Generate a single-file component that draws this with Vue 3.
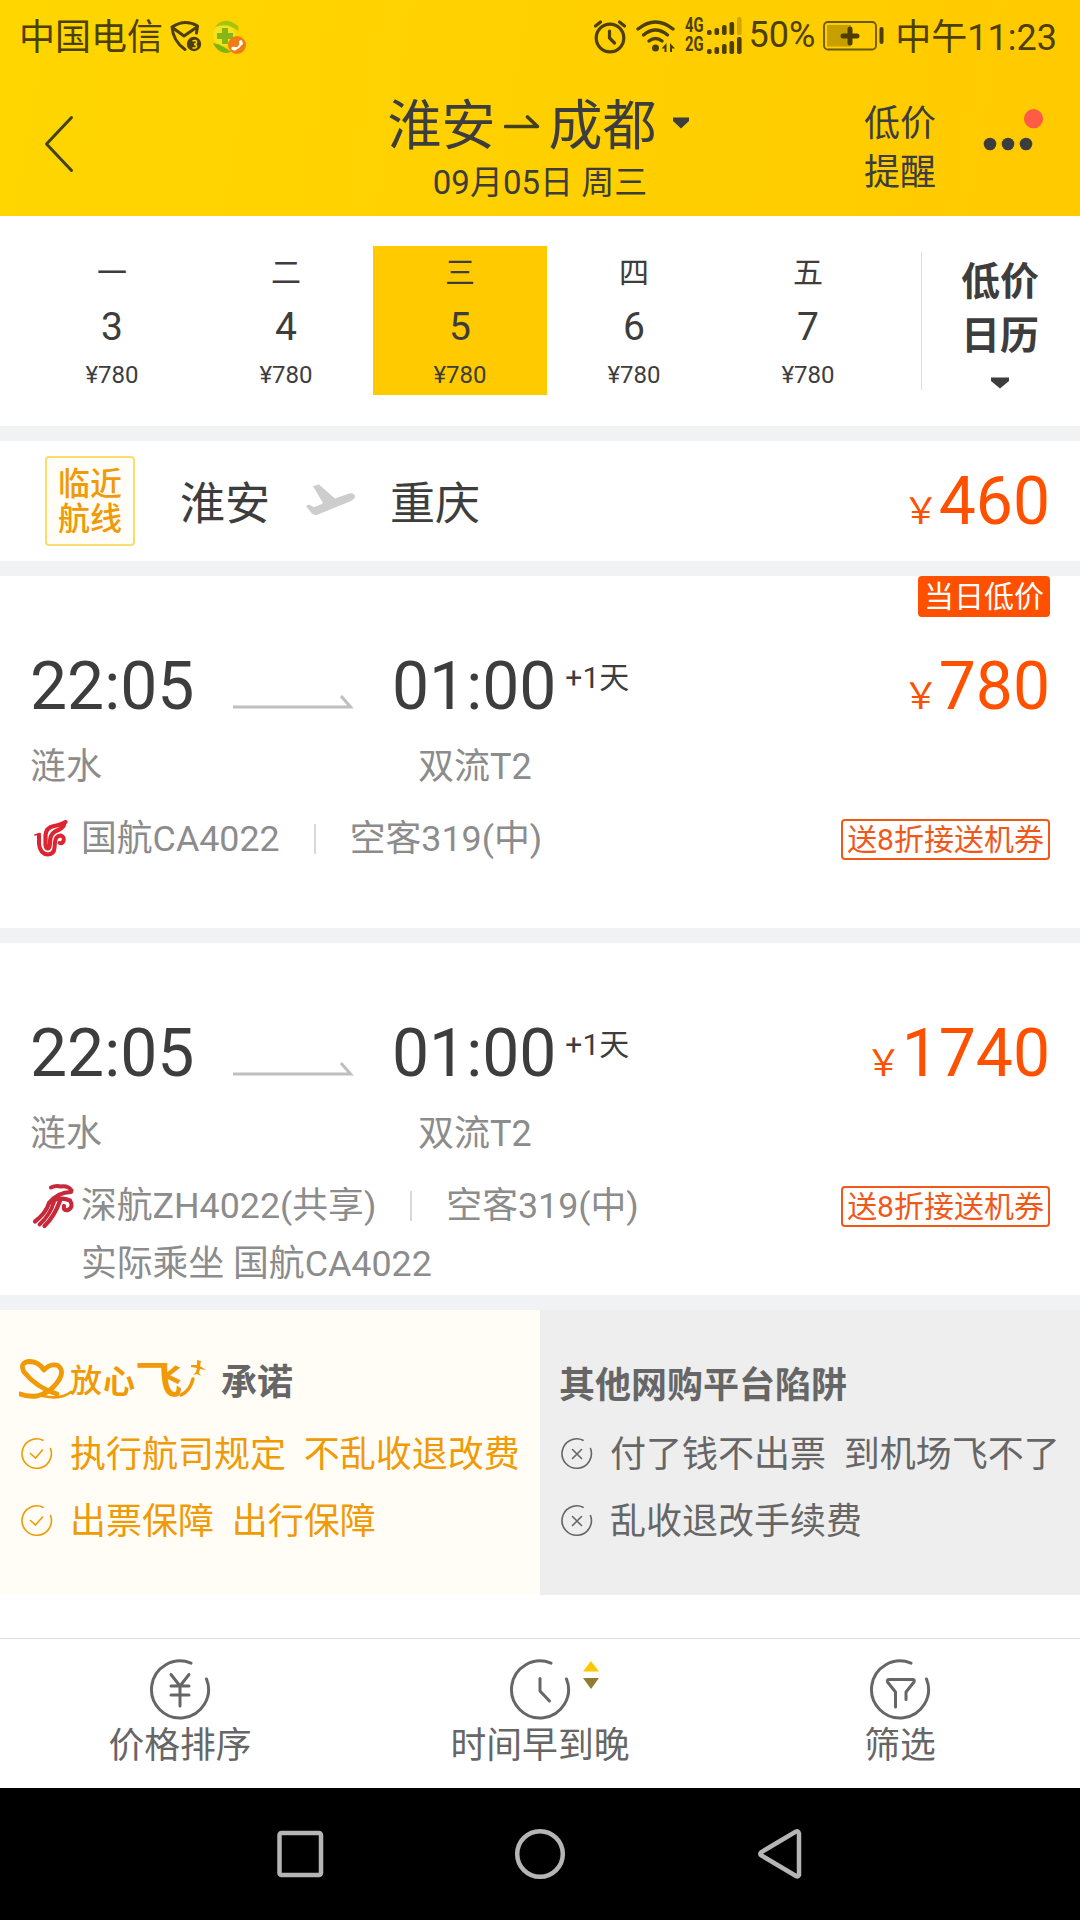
<template>
  <div class="page">
    <header class="header">
      <!-- Status bar -->
      <div class="status-bar">
        <span class="carrier">中国电信</span>
        <svg class="mail-icon" width="32" height="34" viewBox="0 0 32 34">
          <path d="M15 29.500Q3 21 2 7Q15 -1.500 27.500 6L26.500 13" fill="none" stroke="#4d3f00" stroke-width="3" stroke-linejoin="round" stroke-linecap="round" />
          <path d="M3 8L14 16L27 7" fill="none" stroke="#4d3f00" stroke-width="3" stroke-linejoin="round" />
          <circle cx="24" cy="24" r="7.200" fill="#4d3f00" />
          <path d="M22.500 21q4-1.500 4 1.300q0 1.700-2.500 1.900q2.500.2 2.500 2q0 2.600-4 1.600" fill="none" stroke="#ffd400" stroke-width="1.500" />
        </svg>
        <svg class="care-icon" width="36" height="38" viewBox="0 0 36 38">
          <circle cx="13" cy="17" r="11" fill="#f3e21c" />
          <path d="M4 9Q13 -3 27 8Q28 11 27 13Q17 4 4 9Z" fill="#a5c40c" />
          <path d="M2 25Q12 27 20 34Q8 38 2 25Z" fill="#7fb212" />
          <path d="M11 10h6v5h5v6h-5v5h-6v-5H6v-6h5z" fill="#86b516" />
          <circle cx="26" cy="27" r="9" fill="#ef7d14" />
          <path d="M22 31Q29 31 30 24" fill="none" stroke="#fff" stroke-width="1.800" stroke-linecap="round" />
          <path d="M22 30.500l2 .2M29.800 24l.4 1.500" fill="none" stroke="#fff" stroke-width="3.400" stroke-linecap="round" />
        </svg>
        <span class="spacer"></span>
        <svg class="alarm-icon" width="34" height="36" viewBox="0 0 34 36" fill="none" stroke="#4d3f00" stroke-width="3.200" stroke-linecap="round">
          <circle cx="17" cy="20" r="13.800" />
          <path d="M16.500 13v7l5 5" />
          <path d="M2.500 8l5-4M31.500 8l-5-4" />
        </svg>
        <svg class="wifi-icon" width="40" height="36" viewBox="0 0 40 36" fill="none" stroke="#4d3f00" stroke-width="3.400" stroke-linecap="round">
          <path d="M2 10Q19.500 -4 37 10" />
          <path d="M7.500 16Q19.500 6 31.500 16" />
          <path d="M13 22Q19.500 17 26 22" />
          <circle cx="19.500" cy="29" r="3.500" fill="#4d3f00" stroke="none" />
          <path d="M25.500 29.500l5-5.500v9h-2v-3.500zM34 24l5 5.500h-3v3.500h-2z" stroke="none" fill="#4d3f00" />
        </svg>
        <div class="net-labels">
          <span>4G</span>
          <span>2G</span>
        </div>
        <svg class="signal-icon" width="36" height="38" viewBox="0 0 36 38" fill="#4d3f00">
          <g v-for="(h, i) in [5, 7, 10, 13, 17]" :key="i">
            <rect v-if="i < 4" :x="i * 7.500" :y="18 - h" width="4.600" :height="h" rx="1.800" />
            <rect :x="i * 7.500" :y="37 - h" width="4.600" :height="h" rx="1.800" />
          </g>
          <rect x="30" y="0" width="4.600" height="18" rx="1.800" fill="#d0a800" />
        </svg>
        <span class="battery-text">50%</span>
        <svg class="battery-icon" width="62" height="32" viewBox="0 0 62 32">
          <rect x="1" y="2" width="52" height="27.500" rx="4" fill="none" stroke="#6b5800" stroke-width="1.800" />
          <rect x="4" y="5" width="24" height="21.500" fill="#c79f00" />
          <path d="M27 9v14M20 16h14" stroke="#4d3f00" stroke-width="5" stroke-linecap="round" />
          <rect x="56.500" y="7" width="4" height="17" rx="2" fill="#4d3f00" />
        </svg>
        <span class="clock">中午11:23</span>
      </div>

      <!-- Title bar -->
      <div class="title-bar">
        <div class="title-left">
          <svg width="30" height="58" viewBox="0 0 30 58">
            <path d="M27.500 2.500L2.500 29L27.500 55.500" fill="none" stroke="#45401c" stroke-width="3" stroke-linecap="round" stroke-linejoin="round" />
          </svg>
        </div>
        <div class="title-center">
          <div class="route">
            <span>淮安</span>
            <svg class="route-arrow" width="36" height="16" viewBox="0 0 36 16">
              <path d="M1.500 12.500H33.500L23.500 3" fill="none" stroke="#45401c" stroke-width="3.600" stroke-linecap="round" stroke-linejoin="round" />
            </svg>
            <span>成都</span>
            <svg class="route-caret" width="18" height="12" viewBox="0 0 18 12">
              <path d="M1 0.500H17V4L9 11.500L1 4Z" fill="#3d3d3d" />
            </svg>
          </div>
          <div class="route-date">09月05日 周三</div>
        </div>
        <div class="title-right">
          <div class="remind">低价<br />提醒</div>
          <svg class="more-icon" width="62" height="44" viewBox="0 0 62 44">
            <circle cx="7" cy="35" r="6.300" fill="#3d3d3d" />
            <circle cx="25" cy="35" r="6.300" fill="#3d3d3d" />
            <circle cx="43" cy="35" r="6.300" fill="#3d3d3d" />
            <circle cx="50.500" cy="9.700" r="9.600" fill="#ff5b45" />
          </svg>
        </div>
      </div>
    </header>

    <!-- Dates -->
    <section class="dates">
      <div
        v-for="(day, index) in days"
        :key="day.date"
        class="day"
        :class="{ active: index === selectedDay }"
        @click="selectedDay = index"
      >
        <span class="day-week">{{ day.week }}</span>
        <span class="day-num">{{ day.date }}</span>
        <span class="day-price">¥{{ day.price }}</span>
      </div>
      <div class="calendar">
        <span>低价</span>
        <span>日历</span>
        <svg width="20" height="12" viewBox="0 0 20 12">
          <path d="M1 0.500H19V4L10 11.500L1 4Z" fill="#3d3d3d" />
        </svg>
      </div>
    </section>

    <!-- Nearby route -->
    <section class="nearby">
      <div class="nearby-badge">临近<br />航线</div>
      <span class="nearby-city">淮安</span>
      <svg class="plane-icon" width="51" height="34" viewBox="0 0 51 34">
        <path d="M8 3L14 1.500L30 15.500L44 10.500Q49 9.500 50 13Q50 16 46 18L13 31.500Q9 33 6.500 30L1 23L4 21.500L8.500 24Q15 22.500 18 20Z" fill="#cdcdcd" />
      </svg>
      <span class="nearby-city">重庆</span>
      <span class="spacer"></span>
      <div class="price"><span class="yen">￥</span>460</div>
    </section>

    <!-- Flights -->
    <section v-for="flight in flights" :key="flight.no" class="flight">
      <span v-if="flight.tag" class="flight-tag">{{ flight.tag }}</span>
      <div class="flight-times">
        <span class="time depart">{{ flight.depart }}</span>
        <svg class="line-arrow" width="122" height="16" viewBox="0 0 122 16">
          <path d="M0 13H117.500L108 2" fill="none" stroke="#bfbfbf" stroke-width="3" />
        </svg>
        <span class="time">{{ flight.arrive }}</span>
        <span class="plus-day">+1天</span>
        <span class="spacer"></span>
        <div class="price"><span class="yen">￥</span>{{ flight.price }}</div>
      </div>
      <div class="flight-ports">
        <span class="port-from">{{ flight.from }}</span>
        <span>{{ flight.to }}</span>
      </div>
      <div class="flight-info">
        <div class="airline-logo">
          <svg v-if="flight.logo === 'ca'" class="logo-ca" width="34" height="38" viewBox="0 0 34 38" fill="none" stroke="#dc2531" stroke-linecap="round">
            <path d="M1 15L6 13.500" stroke-width="1.600" />
            <path d="M5 15V24Q6 34 14 34.500Q20 34 20.500 28L21 22Q21.500 16 26.500 15.500Q31 17 29.500 21Q28 24 25.500 23" stroke-width="4" />
            <path d="M11.500 16V25Q12 28.500 14 28.500Q16 28 16 22Q16 14.500 21 11.500Q28 9 30 5" stroke-width="4.200" />
            <path d="M11.500 15Q12 7.500 20 6Q28 4.500 31.500 2" stroke-width="4" />
          </svg>
          <svg v-else width="43" height="46" viewBox="0 0 43 46" fill="none" stroke="#c7283a" stroke-linecap="round">
            <path d="M19 4.500Q24 2 29 3.500Q36 2.500 39.500 7.500" stroke-width="4" />
            <path d="M39 9Q26 9 17 20Q27 13 38 17.500Q42 24 36 27Q31 28 32 23" stroke-width="4.200" />
            <path d="M17 20Q14 30 3 38.500" stroke-width="4.200" />
            <path d="M22 19Q18 32 7.500 41.500" stroke-width="3.800" />
            <path d="M28 18Q22 34 12.500 43" stroke-width="4.200" />
          </svg>
        </div>
        <span>{{ flight.no }}</span>
        <i class="bar"></i>
        <span>{{ flight.plane }}</span>
        <span class="spacer"></span>
        <span class="coupon">送8折接送机券</span>
      </div>
      <div v-if="flight.actual" class="flight-actual">{{ flight.actual }}</div>
    </section>

    <!-- Promise -->
    <section class="promise">
      <div class="promise-col good">
        <div class="promise-title">
          <svg class="promise-logo" width="190" height="64" viewBox="0 -10 190 64">
            <g fill="none" stroke="#ef9a06" stroke-linecap="round" stroke-linejoin="round">
              <path d="M38 35Q18 29 5 13Q0 3 11 2.500Q20 3 25 11Q31 4 39 6.500Q47 13 37 25Q30 34 18 37Q8 38 1 35" stroke-width="4.800" />
              <path d="M24 37Q42 41 52 33" stroke-width="2.600" />
              <path d="M162 36Q171 32 174 20" stroke-width="3.400" />
            </g>
            <text x="51" y="33" font-size="32" font-weight="500" fill="#ef9a06">放</text>
            <text x="84" y="34" font-size="32" font-weight="700" fill="#ef9a06">心</text>
            <text x="0" y="0" font-size="38" font-weight="700" fill="#ef9a06" transform="translate(116 34) scale(1.250 1)">飞</text>
            <path d="M178 1L182 2L181 7L187 11L181 10L180 14L182 17L178 15L174 16L177 13L178 9L172 8L172 6L178 6Z" fill="#ef9a06" />
          </svg>
          <b>承诺</b>
        </div>
        <div v-for="text in goods" :key="text" class="promise-row">
          <svg width="32" height="32" viewBox="0 0 32 32" fill="none" stroke="#ef9a06" stroke-width="1.600" stroke-linecap="round">
            <path d="M22 2.300A14.700 14.700 0 1 0 29.500 10.500" />
            <path d="M9.500 15.500L14.500 20L21.500 12" />
          </svg>
          <span>{{ text }}</span>
        </div>
      </div>
      <div class="promise-col bad">
        <div class="promise-title"><b>其他网购平台陷阱</b></div>
        <div v-for="text in bads" :key="text" class="promise-row">
          <svg width="32" height="32" viewBox="0 0 32 32" fill="none" stroke="#666" stroke-width="1.600" stroke-linecap="round">
            <path d="M22 2.300A14.700 14.700 0 1 0 29.500 10.500" />
            <path d="M11.500 11.500L20.500 20.500M20.500 11.500L11.500 20.500" />
          </svg>
          <span>{{ text }}</span>
        </div>
      </div>
    </section>

    <!-- Sort bar -->
    <footer class="toolbar">
      <div v-for="tool in tools" :key="tool.name" class="tool">
        <svg class="tool-icon" width="62" height="62" viewBox="0 0 62 62" fill="none" stroke="#666" stroke-width="3" stroke-linecap="round" stroke-linejoin="round">
          <path d="M42 4.200A28.500 28.500 0 1 0 57.500 20" />
          <path v-if="tool.icon === 'yen'" d="M22 15.500L31 27L40 15.500M22 27H40M22 36H40M31 27V47" />
          <path v-else-if="tool.icon === 'clock'" d="M31 19.500V32L40.500 42" />
          <path v-else d="M26.500 48V33L18.500 23Q18 20.500 20 20.500H43.500Q46 20.500 45 23L37 33V40.500" />
        </svg>
        <svg v-if="tool.icon === 'clock'" class="sort-arrows" width="16" height="29" viewBox="0 0 16 29">
          <path d="M8 0L16 10.500H0Z" fill="#fdc700" />
          <path d="M0 17H16L8 28Z" fill="#8f7d33" />
        </svg>
        <span>{{ tool.name }}</span>
      </div>
    </footer>

    <!-- System nav -->
    <nav class="sys-nav">
      <svg width="52" height="52" viewBox="0 0 52 52"><rect x="5.500" y="5" width="41.500" height="42" rx="2" /></svg>
      <svg width="52" height="52" viewBox="0 0 52 52"><circle cx="26" cy="26" r="22.800" /></svg>
      <svg width="52" height="52" viewBox="0 0 52 52"><path d="M45 5.500V47Q44 49 42 48L7.500 27.500Q5 26 7.500 24L42 3.500Q44.500 2.500 45 5.500Z" /></svg>
    </nav>
  </div>
</template>

<script setup>
import { ref } from 'vue'

const selectedDay = ref(2)

const days = [
  { week: '一', date: 3, price: 780 },
  { week: '二', date: 4, price: 780 },
  { week: '三', date: 5, price: 780 },
  { week: '四', date: 6, price: 780 },
  { week: '五', date: 7, price: 780 }
]

const flights = [
  {
    no: '国航CA4022',
    logo: 'ca',
    tag: '当日低价',
    depart: '22:05',
    arrive: '01:00',
    from: '涟水',
    to: '双流T2',
    plane: '空客319(中)',
    price: 780
  },
  {
    no: '深航ZH4022(共享)',
    logo: 'zh',
    depart: '22:05',
    arrive: '01:00',
    from: '涟水',
    to: '双流T2',
    plane: '空客319(中)',
    price: 1740,
    actual: '实际乘坐 国航CA4022'
  }
]

const goods = ['执行航司规定  不乱收退改费', '出票保障  出行保障']
const bads = ['付了钱不出票  到机场飞不了', '乱收退改手续费']

const tools = [
  { name: '价格排序', icon: 'yen' },
  { name: '时间早到晚', icon: 'clock' },
  { name: '筛选', icon: 'filter' }
]
</script>

<style>
body {
  margin: 0;
}
</style>

<style scoped>
.page {
  width: 1080px;
  height: 1920px;
  display: flex;
  flex-direction: column;
  overflow: hidden;
  background: #fff;
  color: #3d3d3d;
  font-family: Roboto, "Noto Sans CJK SC", sans-serif;
  font-size: 36px;
  font-weight: 400;
}

svg {
  display: block;
  flex-shrink: 0;
}

span,
b {
  white-space: pre;
}

.spacer {
  flex: 1;
}

.header {
  height: 216px;
  background: linear-gradient(100deg, #ffd600, #ffca00);
}

/* Status bar */
.status-bar {
  display: flex;
  height: 72px;
  padding: 0 23px 0 19px;
  color: #4d3f00;
  line-height: 76px;
}

.mail-icon {
  margin: 20px 0 0 7px;
}

.care-icon {
  margin: 18px 0 0 9px;
}

.alarm-icon {
  margin-top: 18px;
}

.wifi-icon {
  margin: 19px 0 0 9px;
}

.net-labels {
  display: flex;
  flex-direction: column;
  width: 20px;
  margin: 16px 0 0 9px;
  font-size: 20px;
  font-weight: 700;
  line-height: 19px;
}

.net-labels span {
  transform: scaleX(0.74);
  transform-origin: left;
}

.signal-icon {
  margin: 17px 0 0 2px;
}

.battery-text {
  margin-left: 6px;
  line-height: 71px;
}

.battery-icon {
  margin: 20px 0 0 8px;
}

.clock {
  margin-left: 10px;
}

/* Title bar */
.title-bar {
  display: grid;
  grid-template-columns: 1fr auto 1fr;
  height: 144px;
}

.title-left {
  padding: 43px 0 0 44px;
}

.route {
  display: flex;
  justify-content: center;
  height: 74px;
  padding: 15px 3px 0 0;
  font-size: 54px;
  line-height: 79px;
}

.route-arrow {
  margin: 27px 9px 0 8px;
}

.route-caret {
  margin: 30px 0 0 15px;
}

.route-date {
  text-align: center;
  font-size: 33px;
  line-height: 43px;
}

.title-right {
  display: flex;
  justify-content: flex-end;
  padding-right: 35px;
}

.remind {
  padding-top: 28px;
  line-height: 49px;
}

.more-icon {
  margin: 37px 0 0 47px;
}

/* Dates */
.dates {
  display: flex;
  height: 180px;
  padding: 30px 0 0 25px;
  border-bottom: 15px solid #f0f2f4;
}

.day {
  display: flex;
  flex-direction: column;
  align-items: center;
  width: 174px;
  height: 149px;
}

.day.active {
  background: #ffca00;
}

.day-week {
  margin-top: 5px;
  font-size: 30px;
  line-height: 44px;
}

.day-num {
  margin-top: 7px;
  font-size: 39px;
  line-height: 50px;
}

.day-price {
  margin-top: 7px;
  font-size: 24px;
  line-height: 32px;
}

.calendar {
  display: flex;
  flex: 1;
  flex-direction: column;
  align-items: center;
  height: 138px;
  margin: 6px 0 0 26px;
  padding-right: 2px;
  border-left: 1px solid #dcdcdc;
  font-size: 39px;
  font-weight: 700;
  line-height: 54px;
}

.calendar span:first-child {
  margin-top: 3px;
}

.calendar svg {
  margin-top: 14px;
}

/* Nearby route */
.nearby {
  display: flex;
  height: 120px;
  padding: 0 30px 0 45px;
  border-bottom: 15px solid #f0f2f4;
}

.nearby-badge {
  box-sizing: border-box;
  width: 90px;
  height: 90px;
  margin: 15px 45px 0 0;
  padding-top: 9px;
  border: 2px solid #fbdc70;
  border-radius: 4px;
  background: #fffdf6;
  color: #ef9a06;
  font-size: 32px;
  font-weight: 500;
  line-height: 35px;
  text-align: center;
}

.nearby-city {
  font-size: 45px;
  line-height: 127px;
}

.plane-icon {
  margin: 42px 34px 0 35px;
}

.price {
  color: #ff5000;
  font-size: 66px;
  line-height: 121px;
}

.yen {
  font-family: "Noto Sans CJK SC", sans-serif;
  font-size: 36px;
  line-height: 36px;
}

/* Flights */
.flight {
  position: relative;
  height: 352px;
  border-bottom: 15px solid #f0f2f4;
}

.flight-tag {
  position: absolute;
  top: 0;
  right: 30px;
  padding: 0 6px;
  border-radius: 4px;
  background: #ff5000;
  color: #fff;
  font-size: 30px;
  line-height: 41px;
}

.flight-times {
  display: flex;
  height: 80px;
  padding: 68px 30px 0;
}

.flight-times .price,
.time {
  line-height: 85px;
}

.time {
  font-size: 66px;
}

.depart {
  width: 203px;
}

.line-arrow {
  margin: 50px 37px 0 0;
}

.plus-day {
  margin-left: 9px;
  font-size: 30px;
  line-height: 67px;
}

.flight-ports {
  display: flex;
  height: 50px;
  padding: 18px 30px 0;
  color: #8c8c8c;
  line-height: 50px;
}

.port-from {
  width: 388px;
}

.flight-info {
  display: flex;
  align-items: center;
  height: 50px;
  margin-top: 22px;
  padding: 0 30px 0 82px;
  color: #8c8c8c;
  font-size: 35.800px;
  line-height: 52px;
}

.airline-logo {
  display: flex;
  justify-content: center;
  width: 43px;
  margin: 0 6px 0 -50px;
}

.logo-ca {
  margin-right: 5px;
}

.bar {
  width: 2px;
  height: 30px;
  margin: 0 34px;
  background: #d8d8d8;
}

.coupon {
  padding: 0 4px;
  border: 2px solid #f0581a;
  border-radius: 4px;
  color: #f0581a;
  font-size: 30px;
  line-height: 37px;
}

.flight-actual {
  margin-top: 8px;
  padding-left: 81px;
  color: #8c8c8c;
  font-size: 35.800px;
  line-height: 50px;
}

/* Promise */
.promise {
  display: flex;
  height: 285px;
  margin-bottom: 43px;
}

.promise-col {
  width: 540px;
}

.good {
  background: #fffdf6;
  color: #ef9a06;
}

.bad {
  background: #eee;
  color: #666;
}

.promise-title {
  display: flex;
  height: 110px;
  padding-left: 19px;
  color: #666;
  line-height: 146px;
}

.bad .promise-title {
  line-height: 152px;
}

.promise-logo {
  margin: 39px 12px 0 0;
}

.promise-row {
  display: flex;
  align-items: center;
  gap: 17px;
  height: 67px;
  padding-left: 21px;
  line-height: 42px;
}

.promise-row span {
  margin-top: 3px;
}

/* Sort bar */
.toolbar {
  display: flex;
  height: 149px;
  border-top: 1px solid #dcdcdc;
  color: #666;
}

.tool {
  position: relative;
  display: flex;
  flex: 1;
  flex-direction: column;
  align-items: center;
  font-size: 35.800px;
  line-height: 50px;
}

.tool-icon {
  margin: 20px 0 0;
}

.sort-arrows {
  position: absolute;
  top: 22px;
  left: 223px;
}

/* System nav */
.sys-nav {
  display: flex;
  justify-content: center;
  align-items: center;
  gap: 188px;
  height: 132px;
  background: #000;
}

.sys-nav svg {
  fill: none;
  stroke: #b5b5b5;
  stroke-width: 4.500;
}
</style>
